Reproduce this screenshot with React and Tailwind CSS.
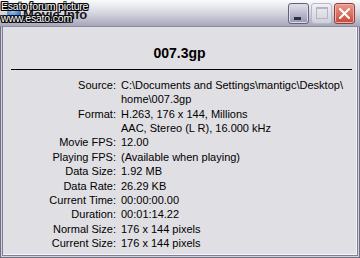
import React from "react";

const rows = [
  { label: "Source:", value: ["C:\\Documents and Settings\\mantigc\\Desktop\\", "home\\007.3gp"] },
  { label: "Format:", value: ["H.263, 176 x 144, Millions", "AAC, Stereo (L R), 16.000 kHz"] },
  { label: "Movie FPS:", value: ["12.00"] },
  { label: "Playing FPS:", value: ["(Available when playing)"] },
  { label: "Data Size:", value: ["1.92 MB"] },
  { label: "Data Rate:", value: ["26.29 KB"] },
  { label: "Current Time:", value: ["00:00:00.00"] },
  { label: "Duration:", value: ["00:01:14.22"] },
  { label: "Normal Size:", value: ["176 x 144 pixels"] },
  { label: "Current Size:", value: ["176 x 144 pixels"] },
];

const outline =
  "[text-shadow:1px_0_0_#000,-1px_0_0_#000,0_1px_0_#000,0_-1px_0_#000,1px_1px_0_#000,-1px_-1px_0_#000,1px_-1px_0_#000,-1px_1px_0_#000]";

export default function App() {
  return (
    <div className="relative w-[360px] h-[258px] overflow-hidden flex flex-col bg-[#E0DFE3] font-['Liberation_Sans',Arial,sans-serif] text-black">
      {/* Title bar */}
      <div className="h-[27px] shrink-0 flex items-center bg-gradient-to-b from-[#FBFBFC] via-[#D6D6E0] to-[#A6A6BA] border-b border-[#8C8CA0]">
        <svg width="16" height="16" viewBox="0 0 16 16" className="ml-[6px]">
          <defs>
            <radialGradient id="g" cx="0.4" cy="0.35" r="0.7">
              <stop offset="0" stopColor="#9CC8F4" />
              <stop offset="1" stopColor="#1E5BB8" />
            </radialGradient>
          </defs>
          <circle cx="8" cy="8" r="7" fill="url(#g)" />
        </svg>
        <span className="ml-[1px] mt-[3px] text-[13px] font-bold text-[#1A1A1A]">Movie Info</span>
        <div className="ml-auto mr-[5px] flex gap-[2px]">
          <div className="relative w-[21px] h-[21px] rounded-[3px] border border-[#62627C] bg-gradient-to-b from-[#E2E2EC] to-[#9696B2] shadow-[inset_0_0_0_1px_#DCDCE8]">
            <div className="absolute left-[5px] top-[13px] w-[7px] h-[3px] bg-[#2E2E4A]" />
          </div>
          <div className="flex items-center justify-center w-[21px] h-[21px] rounded-[3px] border border-[#B8B8C8] bg-gradient-to-b from-[#F0F0F4] to-[#D0D0DA]">
            <div className="w-[12px] h-[12px] border border-t-2 border-[#B4B4C4]" />
          </div>
          <div className="flex items-center justify-center w-[21px] h-[21px] rounded-[3px] border border-[#8E3E3E] bg-gradient-to-b from-[#EE9A8E] to-[#C4483C] shadow-[inset_0_0_0_1px_#F2B0A8]">
            <svg width="11" height="11" viewBox="0 0 11 11">
              <path d="M1 1L10 10M10 1L1 10" stroke="#fff" strokeWidth="2" strokeLinecap="square" />
            </svg>
          </div>
        </div>
      </div>

      {/* Frame and content */}
      <div className="flex-1 flex flex-col border-x border-b border-[#6E6E84]">
        <div className="flex-1 flex flex-col border-x border-b border-[#D2D2DC]">
          <div className="flex-1 flex flex-col border-l border-r border-b border-[#7E7E94]">
            <div className="flex-1 border-r border-b border-[#F4F4F8] pt-[18px]">
              <div className="h-[17px] leading-[17px] text-center text-[14px] font-bold">007.3gp</div>
              <div className="mt-[7px] ml-[8px] mr-[4px] h-px bg-black" />
              <div className="mt-[8px] grid grid-cols-[113px_1fr] gap-x-[5px] text-[11px] leading-[14.36px]">
                {rows.map((r) => (
                  <React.Fragment key={r.label}>
                    <div className="text-right">{r.label}</div>
                    <div>
                      {r.value.map((v) => (
                        <div key={v} className="whitespace-nowrap">{v}</div>
                      ))}
                    </div>
                  </React.Fragment>
                ))}
              </div>
            </div>
          </div>
        </div>
      </div>

      {/* Watermark */}
      <div className={`absolute left-[1px] top-0 text-[10.5px] leading-[12px] tracking-[-0.2px] text-white ${outline}`}>
        <div>Esato forum picture</div>
        <div>www.esato.com</div>
      </div>
    </div>
  );
}
